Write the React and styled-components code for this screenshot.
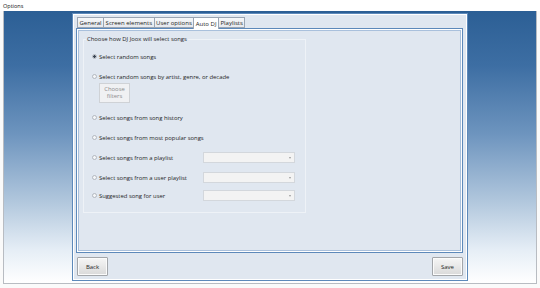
import React from "react";
import styled, { createGlobalStyle } from "styled-components";

const Global = createGlobalStyle`
  html, body { margin: 0; padding: 0; }
  body { width: 540px; height: 288px; overflow: hidden; background: #fff;
    font-family: "Open Sans", "Noto Sans", sans-serif; color: #1e1e1e; }
  * { box-sizing: border-box; }
`;

const Window = styled.div`
  width: 540px;
  height: 288px;
  display: flex;
  flex-direction: column;
  background: #fafafa;
`;

const TitleBar = styled.div`
  height: 11px;
  padding-left: 3px;
  display: flex;
  align-items: center;
  font-size: 5.5px;
  color: #111;
  background: #fff;
`;

const Client = styled.div`
  flex: 1;
  margin: 0 3px 4px 3px;
  border: 1px solid #b8bcc2;
  border-top: none;
  background: linear-gradient(180deg, #2c5f95 0%, #3d6ea3 20%, #6d94be 45%, #b1c7dd 70%, #e6eef6 88%, #ffffff 100%);
  display: flex;
  justify-content: center;
  padding: 2px 0 2px;
`;

const Panel = styled.div`
  width: 396px;
  background: #e0e7f0;
  border: 1px solid #5d89ba;
  box-shadow: inset 0 0 0 1px #fff;
  padding: 3px 4px 4px 3px;
  display: flex;
  flex-direction: column;
`;

const Tabs = styled.div`
  display: flex;
  align-items: flex-end;
  height: 11px;
  padding-left: 1px;
  position: relative;
  z-index: 1;
`;

const Tab = styled.div`
  height: ${(p) => (p.$active ? "12px" : "11px")};
  padding: 0 1.5px;
  display: flex;
  align-items: center;
  font-size: 6px;
  color: #1e1e1e;
  border: 1px solid #9aa5b3;
  border-bottom: ${(p) => (p.$active ? "none" : "1px solid #9aa5b3")};
  margin-left: -1px;
  background: ${(p) => (p.$active ? "#fff" : "linear-gradient(180deg, #f6f7f9 0%, #e6e9ee 100%)")};
  margin-bottom: ${(p) => (p.$active ? "-1px" : "0")};
  &:first-child { margin-left: 0; }
`;

const Content = styled.div`
  height: 225px;
  border: 1px solid #5d89ba;
  box-shadow: inset 0 0 0 1px #fff, inset 0 0 0 2px #a9c0dc;
  background: #e0e7f0;
  padding: 6px 6px;
`;

const Group = styled.fieldset`
  width: 223px;
  height: 178px;
  margin: 0;
  padding: 0;
  border: 1px solid #eef2f7;
  display: flex;
  flex-direction: column;
`;

const Legend = styled.legend`
  font-size: 5.9px;
  line-height: 9px;
  padding: 0 1px;
  margin-left: 2px;
  color: #1e1e1e;
`;

const Options = styled.div`
  display: flex;
  flex-direction: column;
  gap: 9px;
  padding: 7px 0 0 8px;
`;

const Row = styled.div`
  display: flex;
  align-items: center;
  height: 11px;
  margin-top: ${(p) => p.$shift || 0}px;
`;

const RadioLabel = styled.label`
  display: flex;
  align-items: center;
  gap: 2px;
  width: 111px;
  font-size: 5.9px;
  color: #1e1e1e;
  white-space: nowrap;
`;

const Radio = styled.span`
  width: 5px;
  height: 5px;
  border-radius: 50%;
  border: 1px solid #b4b9c0;
  background: radial-gradient(circle, ${(p) => (p.$checked ? "#3c4654 0, #3c4654 1.2px, #f4f6f8 1.6px" : "#f4f6f8 0")}, #f4f6f8 100%);
  flex: none;
`;

const Block = styled.div`
  display: flex;
  flex-direction: column;
`;

const FilterButton = styled.button`
  margin: 1px 0 0 7px;
  width: 31px;
  height: 20px;
  padding: 0;
  border: 1px solid #cfd2d6;
  background: #f0f1f3;
  color: #8c8c8c;
  font-family: inherit;
  font-size: 5.9px;
  line-height: 7.5px;
  text-align: center;
`;

const Combo = styled.div`
  width: 92px;
  height: 11px;
  border: 1px solid #d3d7dc;
  background: #f3f3f3;
  display: flex;
  align-items: center;
  justify-content: flex-end;
  padding-right: 3px;
`;

const Arrow = styled.span`
  width: 0;
  height: 0;
  border-left: 1.5px solid transparent;
  border-right: 1.5px solid transparent;
  border-top: 2px solid #9a9a9a;
`;

const Footer = styled.div`
  display: flex;
  justify-content: space-between;
  padding: 4px 0 0 1px;
`;

const Button = styled.button`
  width: 31px;
  height: 19px;
  padding: 0;
  border: 1px solid #a3a6aa;
  border-radius: 1px;
  background: linear-gradient(180deg, #f6f6f6 0%, #e8e8e8 50%, #d9d9d9 100%);
  box-shadow: inset 0 0 0 1px #fbfbfb;
  font-family: inherit;
  font-size: 6px;
  color: #1e1e1e;
`;

const tabs = ["General", "Screen elements", "User options", "Auto DJ", "Playlists"];

const Option = ({ checked, children, combo, shift }) => (
  <Row $shift={shift}>
    <RadioLabel>
      <Radio $checked={checked} />
      {children}
    </RadioLabel>
    {combo && (
      <Combo>
        <Arrow />
      </Combo>
    )}
  </Row>
);

export default function App() {
  return (
    <>
      <Global />
      <Window>
        <TitleBar>Options</TitleBar>
        <Client>
          <Panel>
            <Tabs>
              {tabs.map((t) => (
                <Tab key={t} $active={t === "Auto DJ"}>{t}</Tab>
              ))}
            </Tabs>
            <Content>
              <Group>
                <Legend>Choose how DJ Joox will select songs</Legend>
                <Options>
                  <Option checked>Select random songs</Option>
                  <Block>
                    <Option>Select random songs by artist, genre, or decade</Option>
                    <FilterButton disabled>Choose<br />filters</FilterButton>
                  </Block>
                  <Option>Select songs from song history</Option>
                  <Option>Select songs from most popular songs</Option>
                  <Option combo>Select songs from a playlist</Option>
                  <Option combo>Select songs from a user playlist</Option>
                  <Option combo shift={-2}>Suggested song for user</Option>
                </Options>
              </Group>
            </Content>
            <Footer>
              <Button>Back</Button>
              <Button>Save</Button>
            </Footer>
          </Panel>
        </Client>
      </Window>
    </>
  );
}
